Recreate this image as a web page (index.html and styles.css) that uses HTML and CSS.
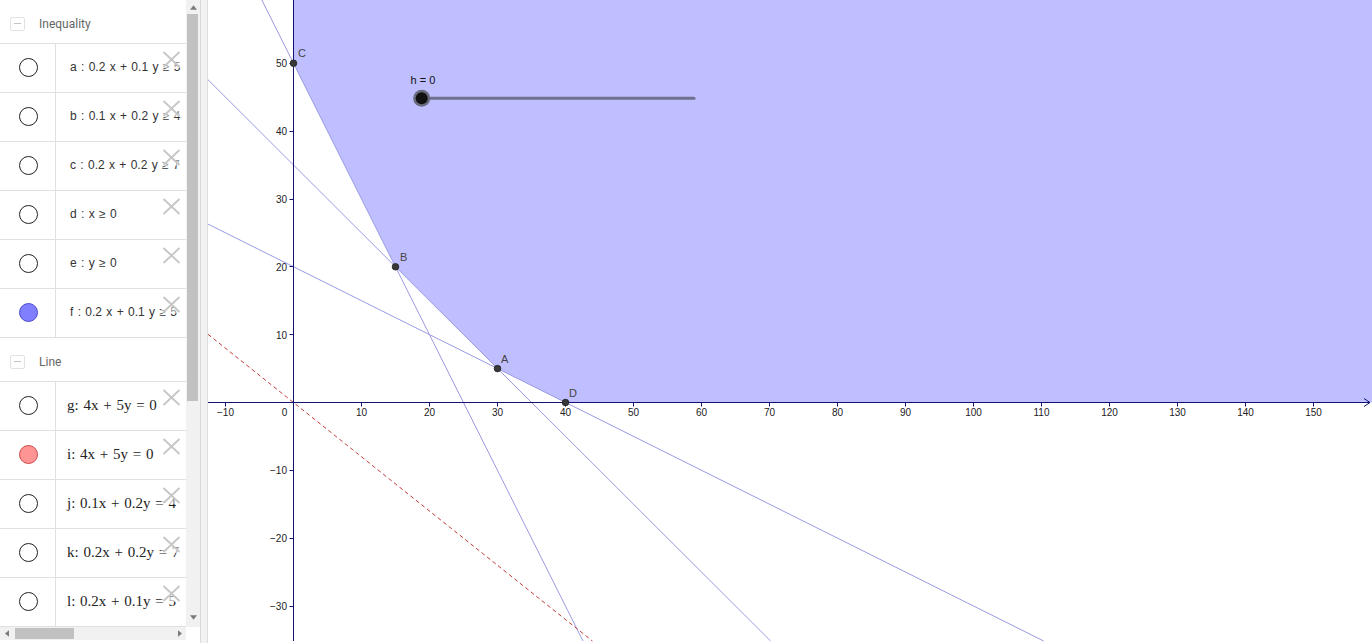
FILE: index.html
```html
<!DOCTYPE html>
<html>
<head>
<meta charset="utf-8">
<title>GeoGebra</title>
<link rel="stylesheet" href="styles.css">
</head>
<body>
<div class="app">
  <aside class="av">
    <div class="av-main">
      <div class="av-list">
        <div class="group-head"><span class="toggle"></span><span class="group-title">Inequality</span></div>
        <div class="item"><div class="marble"><span class="dot"></span></div><div class="expr ineq">a : 0.2 x + 0.1 y ≥ 5</div><span class="del"><svg viewBox="0 0 20 18"><path d="M2.5 2 L18.5 17 M18.5 2 L2.5 17"/></svg></span></div>
        <div class="item"><div class="marble"><span class="dot"></span></div><div class="expr ineq">b : 0.1 x + 0.2 y ≥ 4</div><span class="del"><svg viewBox="0 0 20 18"><path d="M2.5 2 L18.5 17 M18.5 2 L2.5 17"/></svg></span></div>
        <div class="item"><div class="marble"><span class="dot"></span></div><div class="expr ineq">c : 0.2 x + 0.2 y ≥ 7</div><span class="del"><svg viewBox="0 0 20 18"><path d="M2.5 2 L18.5 17 M18.5 2 L2.5 17"/></svg></span></div>
        <div class="item"><div class="marble"><span class="dot"></span></div><div class="expr ineq">d : x ≥ 0</div><span class="del"><svg viewBox="0 0 20 18"><path d="M2.5 2 L18.5 17 M18.5 2 L2.5 17"/></svg></span></div>
        <div class="item"><div class="marble"><span class="dot"></span></div><div class="expr ineq">e : y ≥ 0</div><span class="del"><svg viewBox="0 0 20 18"><path d="M2.5 2 L18.5 17 M18.5 2 L2.5 17"/></svg></span></div>
        <div class="item"><div class="marble"><span class="dot dot-blue"></span></div><div class="expr ineq">f : 0.2 x + 0.1 y ≥ 5</div><span class="del"><svg viewBox="0 0 20 18"><path d="M2.5 2 L18.5 17 M18.5 2 L2.5 17"/></svg></span></div>
        <div class="group-head"><span class="toggle"></span><span class="group-title">Line</span></div>
        <div class="item"><div class="marble"><span class="dot"></span></div><div class="expr eqn">g: 4x + 5y = 0</div><span class="del"><svg viewBox="0 0 20 18"><path d="M2.5 2 L18.5 17 M18.5 2 L2.5 17"/></svg></span></div>
        <div class="item"><div class="marble"><span class="dot dot-red"></span></div><div class="expr eqn">i: 4x + 5y = 0</div><span class="del"><svg viewBox="0 0 20 18"><path d="M2.5 2 L18.5 17 M18.5 2 L2.5 17"/></svg></span></div>
        <div class="item"><div class="marble"><span class="dot"></span></div><div class="expr eqn">j: 0.1x + 0.2y = 4</div><span class="del"><svg viewBox="0 0 20 18"><path d="M2.5 2 L18.5 17 M18.5 2 L2.5 17"/></svg></span></div>
        <div class="item"><div class="marble"><span class="dot"></span></div><div class="expr eqn">k: 0.2x + 0.2y = 7</div><span class="del"><svg viewBox="0 0 20 18"><path d="M2.5 2 L18.5 17 M18.5 2 L2.5 17"/></svg></span></div>
        <div class="item"><div class="marble"><span class="dot"></span></div><div class="expr eqn">l: 0.2x + 0.1y = 5</div><span class="del"><svg viewBox="0 0 20 18"><path d="M2.5 2 L18.5 17 M18.5 2 L2.5 17"/></svg></span></div>
      </div>
      <div class="vscroll">
        <span class="sarrow"><svg viewBox="0 0 8 5"><path d="M0 5 L4 0 L8 5 Z"/></svg></span>
        <div class="vtrack"><div class="vthumb"></div></div>
        <span class="sarrow sarrow-down"><svg viewBox="0 0 8 5"><path d="M0 0 L8 0 L4 5 Z"/></svg></span>
      </div>
    </div>
    <div class="hbar">
      <div class="hscroll">
        <span class="harrow"><svg viewBox="0 0 5 8"><path d="M5 0 L5 8 L0 4 Z"/></svg></span>
        <div class="htrack"><div class="hthumb"></div></div>
        <span class="harrow"><svg viewBox="0 0 5 8"><path d="M0 0 L5 4 L0 8 Z"/></svg></span>
      </div>
      <div class="corner"></div>
    </div>
  </aside>
  <div class="splitter"></div>
  <main class="graph">
    <svg class="plot" viewBox="208 0 1164 643" width="1164" height="643">
      <polygon class="region" points="293.5,0 293.5,63.25 395.5,266.8 497.5,368.6 565.5,402.5 1372,402.5 1372,0"/>
      <line class="ln" x1="261.8" y1="0" x2="583" y2="641"/>
      <line class="ln" x1="208" y1="79.7" x2="770.6" y2="641"/>
      <line class="ln" x1="208" y1="224.1" x2="1043.7" y2="641"/>
      <line class="ln-dash" x1="208" y1="334.3" x2="592.4" y2="641"/>

      <line class="axis" x1="208" y1="402.5" x2="1370" y2="402.5"/>
      <path class="axis" d="M1364 398.5 L1370 402.5 L1364 406.5"/>
      <line class="axis" x1="293.5" y1="0" x2="293.5" y2="641"/>

      <path class="tick" d="M225.5 402.5v4 M361.5 402.5v4 M429.5 402.5v4 M497.5 402.5v4 M565.5 402.5v4 M633.5 402.5v4 M701.5 402.5v4 M769.5 402.5v4 M837.5 402.5v4 M905.5 402.5v4 M973.5 402.5v4 M1041.5 402.5v4 M1109.5 402.5v4 M1177.5 402.5v4 M1245.5 402.5v4 M1313.5 402.5v4"/>
      <path class="tick" d="M289.5 63.5h4 M289.5 131.5h4 M289.5 199.5h4 M289.5 266.5h4 M289.5 334.5h4 M289.5 470.5h4 M289.5 538.5h4 M289.5 606.5h4"/>

      <g class="xlab">
        <text x="225.5" y="416">−10</text>
        <text x="284.5" y="416">0</text>
        <text x="361.5" y="416">10</text>
        <text x="429.5" y="416">20</text>
        <text x="497.5" y="416">30</text>
        <text x="565.5" y="416">40</text>
        <text x="633.5" y="416">50</text>
        <text x="701.5" y="416">60</text>
        <text x="769.5" y="416">70</text>
        <text x="837.5" y="416">80</text>
        <text x="905.5" y="416">90</text>
        <text x="973.5" y="416">100</text>
        <text x="1041.5" y="416">110</text>
        <text x="1109.5" y="416">120</text>
        <text x="1177.5" y="416">130</text>
        <text x="1245.5" y="416">140</text>
        <text x="1313.5" y="416">150</text>
      </g>
      <g class="ylab">
        <text x="287" y="67">50</text>
        <text x="287" y="135">40</text>
        <text x="287" y="203">30</text>
        <text x="287" y="270.5">20</text>
        <text x="287" y="338.5">10</text>
        <text x="287" y="474">−10</text>
        <text x="287" y="542">−20</text>
        <text x="287" y="610">−30</text>
      </g>

      <g class="pt">
        <circle cx="293.5" cy="63.25" r="3.3"/>
        <circle cx="395.5" cy="266.8" r="3.3"/>
        <circle cx="497.5" cy="368.6" r="3.3"/>
        <circle cx="565.5" cy="402.5" r="3.3"/>
      </g>
      <g class="ptlab">
        <text x="298" y="57">C</text>
        <text x="400" y="261">B</text>
        <text x="501" y="363">A</text>
        <text x="569" y="397">D</text>
      </g>

      <text class="slabel" x="410.5" y="84">h = 0</text>
      <line class="sline" x1="422" y1="98.3" x2="694" y2="98.3"/>
      <circle class="sknob-ring" cx="421.7" cy="98.3" r="8.5"/>
      <circle class="sknob" cx="421.7" cy="98.3" r="6"/>
    </svg>
  </main>
</div>
</body>
</html>
```

FILE: styles.css
```css
html, body {
  margin: 0;
  padding: 0;
  background: #ffffff;
  overflow: hidden;
}

.app {
  display: flex;
  width: 1372px;
  height: 643px;
  font-family: "Liberation Sans", Arial, sans-serif;
}

/* ---------- algebra view ---------- */
.av {
  width: 200px;
  height: 643px;
  border-right: 1px solid #d9d9d9;
  display: flex;
  flex-direction: column;
  background: #ffffff;
}

.av-main {
  height: 627px;
  display: flex;
}

.av-list {
  width: 186px;
  overflow: hidden;
}

.group-head {
  height: 44px;
  box-sizing: border-box;
  padding-top: 5px;
  padding-left: 10px;
  display: flex;
  align-items: center;
  border-bottom: 1px solid #e0e0e0;
}

.toggle {
  width: 13px;
  height: 12px;
  border: 1px solid #e2e2e2;
  border-radius: 2px;
  position: relative;
  margin-right: 14px;
}

.toggle::after {
  content: "";
  position: absolute;
  left: 3px;
  top: 5px;
  width: 7px;
  height: 1px;
  background: #c4c4c4;
}

.group-title {
  font-family: Roboto, "Liberation Sans", sans-serif;
  font-size: 12px;
  color: #666666;
}

.item {
  position: relative;
  height: 49px;
  box-sizing: border-box;
  border-bottom: 1px solid #e0e0e0;
  display: flex;
}

.marble {
  width: 56px;
  flex: none;
  border-right: 1px solid #e0e0e0;
  display: flex;
  align-items: center;
  justify-content: center;
  padding-bottom: 2px;
  padding-left: 1px;
  box-sizing: border-box;
}

.dot {
  width: 17px;
  height: 17px;
  border-radius: 50%;
  border: 1px solid #222222;
  background: #ffffff;
}

.dot-blue {
  background: #8080ff;
  border-color: #4a4ad0;
}

.dot-red {
  background: #ff9494;
  border-color: #d04848;
}

.expr {
  flex: 1;
  display: flex;
  align-items: center;
  padding-bottom: 2px;
  white-space: nowrap;
  overflow: hidden;
  color: #333333;
}

.ineq {
  padding-left: 14px;
  font-family: "Liberation Sans", Arial, sans-serif;
  font-size: 12px;
  word-spacing: 1px;
}

.eqn {
  padding-left: 11px;
  font-family: "Liberation Serif", "Times New Roman", serif;
  font-size: 15px;
  word-spacing: 1px;
  color: #222222;
}

.del {
  position: absolute;
  left: 161px;
  top: 6px;
  width: 20px;
  height: 18px;
  background: rgba(255, 255, 255, 0.5);
}

.del svg {
  display: block;
  width: 20px;
  height: 18px;
}

.del path {
  stroke: #c6c6c6;
  stroke-width: 1.8;
  fill: none;
}

/* scrollbars */
.vscroll {
  width: 14px;
  display: flex;
  flex-direction: column;
  background: #f1f1f1;
}

.sarrow {
  height: 14px;
  flex: none;
  display: flex;
  align-items: center;
  justify-content: center;
}

.sarrow-down {
  margin-bottom: 3px;
}

.sarrow svg {
  width: 7px;
  height: 5px;
  fill: #7a7a7a;
}

.vtrack {
  flex: 1;
}

.vthumb {
  margin-left: 1px;
  width: 11px;
  height: 387px;
  background: #c1c1c1;
}

.hbar {
  height: 13px;
  display: flex;
}

.hscroll {
  width: 186px;
  display: flex;
  background: #f1f1f1;
}

.harrow {
  width: 13px;
  flex: none;
  display: flex;
  align-items: center;
  justify-content: center;
}

.harrow svg {
  width: 4px;
  height: 7px;
  fill: #7a7a7a;
}

.htrack {
  flex: 1;
  display: flex;
  align-items: center;
}

.hthumb {
  margin-left: 2px;
  width: 59px;
  height: 11px;
  background: #c1c1c1;
}

.corner {
  flex: 1;
  background: #ffffff;
}

.splitter {
  width: 6px;
  height: 643px;
  background: #f2f2f2;
  border-right: 1px solid #dedede;
}

/* ---------- graphics view ---------- */
.graph {
  flex: 1;
  height: 643px;
  overflow: hidden;
}

.plot {
  display: block;
}

.region {
  fill: #bfbfff;
}

.ln {
  stroke: #9a9ae4;
  stroke-width: 1;
  fill: none;
}

.ln-dash {
  stroke: #c83a3a;
  stroke-width: 1;
  stroke-dasharray: 4 3;
  fill: none;
}

.axis {
  stroke: #121270;
  stroke-width: 1;
  fill: none;
}

.tick {
  stroke: #121270;
  stroke-width: 1;
  fill: none;
}

.xlab text {
  font-family: "Liberation Sans", Arial, sans-serif;
  font-size: 10px;
  fill: #222222;
  text-anchor: middle;
}

.ylab text {
  font-family: "Liberation Sans", Arial, sans-serif;
  font-size: 10px;
  fill: #222222;
  text-anchor: end;
}

.pt circle {
  fill: #383838;
  stroke: #1e1e1e;
  stroke-width: 0.8;
}

.ptlab text {
  font-family: "Liberation Sans", Arial, sans-serif;
  font-size: 11px;
  fill: #444444;
}

.slabel {
  font-family: "Liberation Sans", Arial, sans-serif;
  font-size: 11px;
  fill: #111111;
}

.sline {
  stroke: #70708e;
  stroke-width: 3;
  stroke-linecap: round;
}

.sknob-ring {
  fill: #6a6a7e;
}

.sknob {
  fill: #111111;
}
```
